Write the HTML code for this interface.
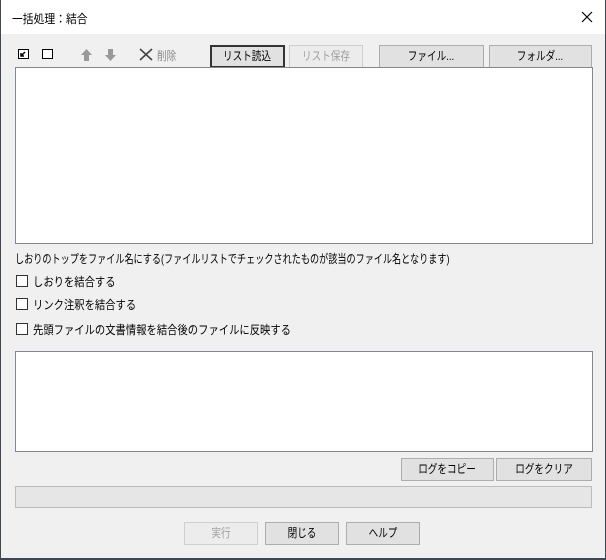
<!DOCTYPE html>
<html><head><meta charset="utf-8"><style>
*{margin:0;padding:0;box-sizing:border-box}
body{width:606px;height:560px;background:#3f4850;position:relative;overflow:hidden;font-family:"Liberation Sans","Noto Sans CJK JP",sans-serif;font-size:12px;color:#000}
.win{position:absolute;left:1px;top:0;width:604px;height:558px;background:#f0f0f0}
.title{position:absolute;left:0;top:0;width:604px;height:34px;background:#fff}
.abs{position:absolute}
.n{display:inline-block;transform:scaleX(0.8);white-space:nowrap}
.btn{position:absolute;height:23px;background:#e1e1e1;border:1px solid #adadad;text-align:center;line-height:21px;font-size:12px;white-space:nowrap}
.btn .n{transform-origin:center}
.btn.def{border:2px solid #333;line-height:19px}
.btn.dis{color:#a0a0a0;background:#ececec;border-color:#cfcfcf}
.box{position:absolute;background:#fff;border:1px solid #828790}
.cb{position:absolute;width:12px;height:12px;border:1px solid #333;background:#fff}
.lbl{position:absolute;font-size:12px;white-space:nowrap}
.lbl .n{transform-origin:left center}
.lbl .c{transform:scaleX(0.86)}
</style></head><body>
<div class="win">
<div class="title"></div>
<div class="lbl" style="left:11px;top:10px"><span class="n" style="transform:scaleX(0.9)">一括処理：結合</span></div>
<svg class="abs" style="left:580px;top:11px" width="12" height="12"><path d="M1 1L11 11M11 1L1 11" stroke="#000" stroke-width="1.2"/></svg>

<svg class="abs" style="left:17px;top:49px" width="12" height="11"><rect x="0.5" y="0.5" width="10" height="9" fill="#fff" stroke="#000"/><path d="M3 4L3 7L6 7M3 7L7 3" stroke="#000" stroke-width="1.5" fill="none"/></svg>
<svg class="abs" style="left:41px;top:49px" width="12" height="11"><rect x="0.5" y="0.5" width="10" height="9" fill="#fff" stroke="#000"/></svg>
<svg class="abs" style="left:79px;top:48px" width="13" height="14"><path d="M6.5 1L1 7H4V13H9V7H12Z" fill="#999"/></svg>
<svg class="abs" style="left:103px;top:48px" width="13" height="14"><path d="M6.5 13L1 7H4V1H9V7H12Z" fill="#999"/></svg>
<svg class="abs" style="left:138px;top:48px" width="14" height="13"><path d="M1 1L13 12M13 1L1 12" stroke="#444" stroke-width="1.6"/></svg>
<div class="lbl" style="left:156px;top:47px;color:#888"><span class="n">削除</span></div>

<div class="btn def" style="left:209px;top:45px;width:75px"><span class="n">リスト読込</span></div>
<div class="btn dis" style="left:288px;top:45px;width:74px"><span class="n">リスト保存</span></div>
<div class="btn" style="left:378px;top:45px;width:105px"><span class="n">ファイル...</span></div>
<div class="btn" style="left:488px;top:45px;width:103px"><span class="n">フォルダ...</span></div>

<div class="box" style="left:14px;top:67px;width:578px;height:177px"></div>
<div class="lbl" style="left:14px;top:250px"><span class="n" style="transform:scaleX(0.76)">しおりのトップをファイル名にする(ファイルリストでチェックされたものが該当のファイル名となります)</span></div>
<div class="cb" style="left:15px;top:275px"></div><div class="lbl" style="left:32px;top:273px"><span class="n c">しおりを結合する</span></div>
<div class="cb" style="left:15px;top:298px"></div><div class="lbl" style="left:32px;top:296px"><span class="n c">リンク注釈を結合する</span></div>
<div class="cb" style="left:15px;top:323px"></div><div class="lbl" style="left:32px;top:321px"><span class="n c">先頭ファイルの文書情報を結合後のファイルに反映する</span></div>

<div class="box" style="left:14px;top:351px;width:578px;height:101px"></div>
<div class="btn" style="left:400px;top:458px;width:93px"><span class="n">ログをコピー</span></div>
<div class="btn" style="left:495px;top:458px;width:96px"><span class="n">ログをクリア</span></div>
<div class="abs" style="left:14px;top:486px;width:577px;height:22px;border:1px solid #bcbcbc;background:#e6e6e6"></div>

<div class="btn dis" style="left:183px;top:522px;width:74px"><span class="n">実行</span></div>
<div class="btn" style="left:264px;top:522px;width:74px"><span class="n">閉じる</span></div>
<div class="btn" style="left:345px;top:522px;width:74px"><span class="n">ヘルプ</span></div>
</div>
</body></html>
